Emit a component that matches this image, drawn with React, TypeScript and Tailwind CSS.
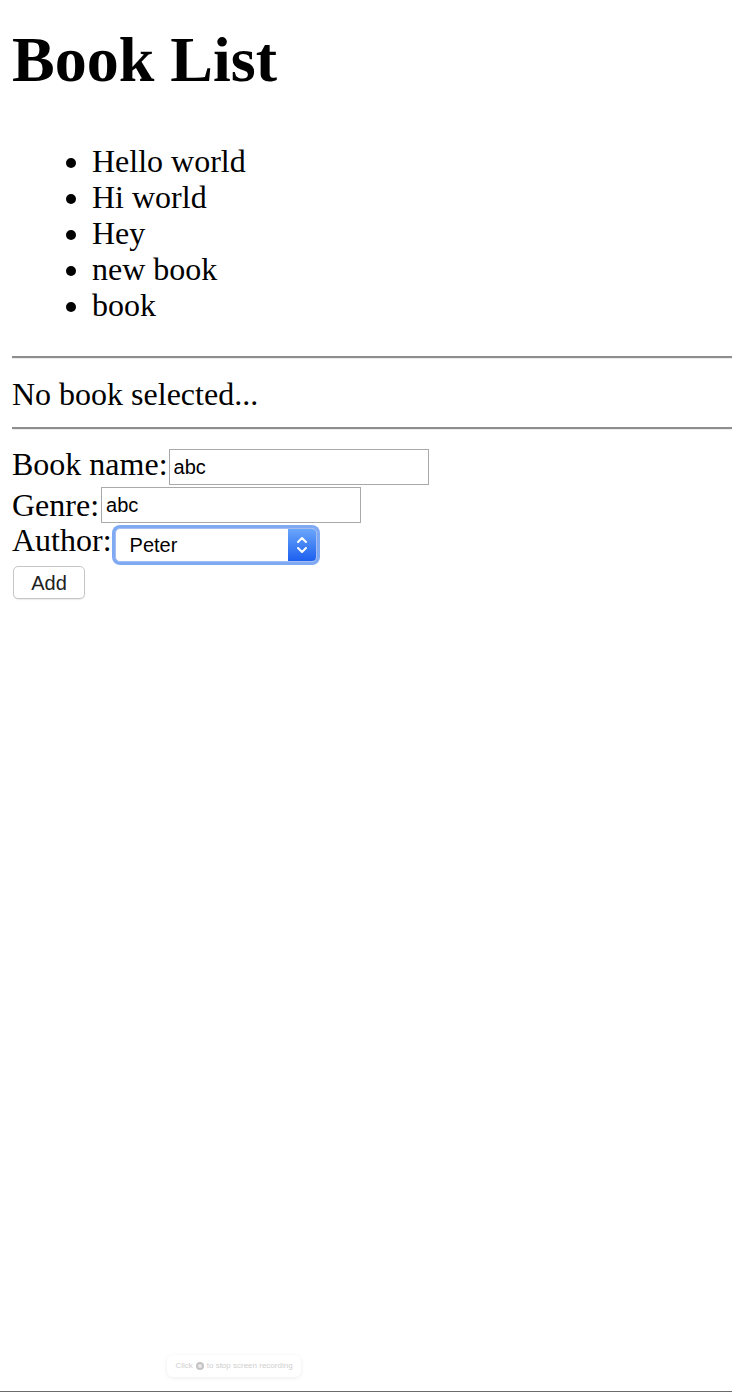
const books = ['Hello world', 'Hi world', 'Hey', 'new book', 'book'];

const serif = "font-['Liberation_Serif','Times_New_Roman',serif]";

const App = () => {
  return (
    <div className="relative flex h-[1392px] flex-col overflow-hidden border-b border-[#6b6b6b] bg-white text-black">
      <div className={`flex flex-col pl-[12px] ${serif}`}>
        <h1 className="mt-[23px] text-[64px] font-bold leading-[74px]">Book List</h1>

        <ul className="mt-[46px] list-disc pl-[80px] text-[32px] leading-[36px]">
          {books.map((book) => (
            <li key={book}>{book}</li>
          ))}
        </ul>

        <div className="mt-[33px] border-t-2 border-b border-t-[#8e8e8e] border-b-[#ececec]" />
        <p className="mt-[17px] text-[32px] leading-[36px]">No book selected...</p>
        <div className="mt-[15px] border-t-2 border-b border-t-[#8e8e8e] border-b-[#ececec]" />

        <form className="mt-[19px] flex flex-col text-[32px] leading-[36px]">
          <div className="flex h-[38px] items-start">
            <label className="-mt-[3px]">Book name:</label>
            <input
              defaultValue="abc"
              className="ml-[1px] h-[36px] w-[260px] border border-[#a9a9a9] px-[4px] font-['Liberation_Sans',Arial,sans-serif] text-[20px] outline-none"
            />
          </div>
          <div className="flex h-[37px] items-start">
            <label>Genre:</label>
            <input
              defaultValue="abc"
              className="ml-[2px] h-[36px] w-[260px] border border-[#a9a9a9] px-[4px] font-['Liberation_Sans',Arial,sans-serif] text-[20px] outline-none"
            />
          </div>
          <div className="flex h-[42px] items-start">
            <label className="-mt-[2px]">Author:</label>
            <div className="mt-[4px] ml-[3px] flex h-[34px] w-[202px] overflow-hidden rounded-[5px] border border-[#a3bdf0] bg-white ring-[3px] ring-[#80a9f3]">
              <select
                defaultValue="Peter"
                className="min-w-0 flex-1 appearance-none bg-transparent pl-[14px] font-['Liberation_Sans',Arial,sans-serif] text-[20px] leading-[32px] outline-none"
              >
                <option>Peter</option>
                <option>Mary</option>
              </select>
              <span className="flex w-[28px] items-center justify-center bg-[linear-gradient(#6aa6fa,#1c5ff0)]">
                <svg width="12" height="22" viewBox="0 0 12 22" fill="none" stroke="white" strokeWidth="2" strokeLinecap="round" strokeLinejoin="round">
                  <path d="M2 8 6 4l4 4" />
                  <path d="M2 14l4 4 4-4" />
                </svg>
              </span>
            </div>
          </div>
          <div className="flex">
            <button
              type="button"
              className="ml-[1px] h-[33px] w-[72px] rounded-[5px] border border-[#c6c6c6] bg-white font-['Liberation_Sans',Arial,sans-serif] text-[20px] leading-none text-[#222] shadow-[0_1px_1px_rgba(0,0,0,0.08)]"
            >
              Add
            </button>
          </div>
        </form>
      </div>

      <div className="absolute top-[1355px] left-[167px] flex h-[22px] w-[134px] items-center justify-center gap-[3px] rounded-[6px] bg-white font-['Liberation_Sans',Arial,sans-serif] text-[8px] text-[#cfcfcf] shadow-[0_1px_4px_rgba(0,0,0,0.08)]">
        <span>Click</span>
        <span className="inline-block h-[8px] w-[8px] rounded-full border-[2px] border-[#c4c4c4] bg-[#e8e8e8]" />
        <span>to stop screen recording</span>
      </div>
    </div>
  );
};

export default App;
